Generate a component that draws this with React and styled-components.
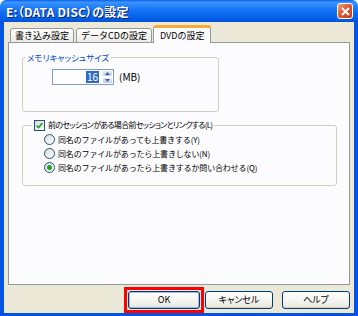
import React from 'react';
import styled, { createGlobalStyle } from 'styled-components';

const GlobalStyle = createGlobalStyle`
  html, body {
    margin: 0;
    padding: 0;
    background: #ffffff;
  }
  body {
    font-family: "Noto Sans CJK JP", "Liberation Sans", sans-serif;
    font-size: 8.5px;
    font-feature-settings: "palt";
  }
`;

const Window = styled.div`
  width: 358px;
  height: 316px;
  display: flex;
  flex-direction: column;
  overflow: hidden;
`;

const TitleBar = styled.div`
  height: 22px;
  flex: none;
  display: flex;
  align-items: center;
  justify-content: space-between;
  padding: 0 5px 0 6px;
  box-sizing: border-box;
  border-radius: 6px 6px 0 0;
  background: linear-gradient(
    to bottom,
    #0a5fe8 0%,
    #3d95ff 10%,
    #2a88fa 22%,
    #1470f2 50%,
    #0463ea 80%,
    #0452d8 100%
  );
`;

const Title = styled.span`
  color: #ffffff;
  font-weight: bold;
  font-size: 12px;
  letter-spacing: 0.2px;
  text-shadow: 1px 1px 0 #0a1e6e;
`;

const CloseButton = styled.div`
  width: 16px;
  height: 16px;
  border: 1px solid #ffffff;
  border-radius: 3px;
  box-sizing: border-box;
  background: linear-gradient(135deg, #f0a080 0%, #e0603a 40%, #c83a18 100%);
  display: flex;
  align-items: center;
  justify-content: center;
`;

const Body = styled.div`
  flex: 1;
  display: flex;
  flex-direction: column;
  background: #ece9d8;
  border: 4px solid #0553e2;
  border-top: none;
  border-bottom-width: 3px;
  padding: 3px 4px 0 4px;
`;

const TabStrip = styled.div`
  display: flex;
  align-items: flex-end;
  height: 18px;
  padding-left: 2px;
  margin-bottom: -1px;
  position: relative;
  z-index: 1;
`;

const Tab = styled.div`
  height: ${(p) => (p.$active ? '18px' : '15px')};
  box-sizing: border-box;
  padding: 0 ${(p) => (p.$active ? '6px' : '4px')};
  margin-right: ${(p) => (p.$active ? '0' : '2px')};
  margin-left: ${(p) => (p.$active ? '-1px' : '0')};
  border: 1px solid #919b9c;
  border-bottom: ${(p) => (p.$active ? 'none' : '1px solid #919b9c')};
  border-top: ${(p) => (p.$active ? '3px solid #f7a93a' : '1px solid #919b9c')};
  border-radius: 3px 3px 0 0;
  background: ${(p) =>
    p.$active ? '#fcfcfe' : 'linear-gradient(to bottom, #ffffff, #ecebe5)'};
  display: flex;
  align-items: center;
  line-height: 12px;
  font-size: 9px;
  font-feature-settings: normal;
  color: #000000;
  white-space: nowrap;
`;

const Panel = styled.div`
  height: 243px;
  box-sizing: border-box;
  border: 1px solid #919b9c;
  background: #fcfcfe;
  padding: 8px 0 0 13px;
`;

const Group = styled.fieldset`
  margin: ${(p) => p.$top || 0}px 0 0 0;
  padding: 0;
  width: ${(p) => p.$width}px;
  box-sizing: border-box;
  border: 1px solid #d0d0bf;
  border-radius: 3px;
  min-inline-size: 0;
`;

const Legend = styled.legend`
  padding: 0 2px;
  margin-left: ${(p) => p.$indent}px;
  line-height: 12px;
  font-size: ${(p) => p.$size || 8.5}px;
  letter-spacing: ${(p) => p.$tight || 0}px;
  color: ${(p) => p.$color || '#0046d5'};
  display: flex;
  align-items: center;
`;

const GroupContent = styled.div`
  padding: ${(p) => p.$pad};
`;

const SpinRow = styled.div`
  display: flex;
  align-items: center;
`;

const SpinBox = styled.div`
  display: flex;
  width: 62px;
  height: 16px;
  box-sizing: border-box;
  border: 1px solid #7f9db9;
  background: #ffffff;
`;

const SpinField = styled.div`
  flex: 1;
  display: flex;
  justify-content: flex-end;
  align-items: center;
  padding-right: 3px;
`;

const Selected = styled.span`
  background: #316ac5;
  color: #ffffff;
  line-height: 12px;
  font-size: 10px;
  padding: 0 1px;
`;

const SpinButtons = styled.div`
  width: 11px;
  display: flex;
  flex-direction: column;
`;

const SpinArrow = styled.div`
  flex: 1;
  background: linear-gradient(to bottom, #e5ecfd, #b8ccf4);
  border: 1px solid #ffffff;
  border-radius: 2px;
  display: flex;
  align-items: center;
  justify-content: center;
`;

const Unit = styled.span`
  margin-left: 5px;
  line-height: 12px;
  font-size: 10px;
`;

const CheckBox = styled.span`
  width: 11px;
  height: 11px;
  box-sizing: border-box;
  border: 1px solid #1c5180;
  background: linear-gradient(135deg, #dcdcd7, #ffffff);
  display: inline-flex;
  align-items: center;
  justify-content: center;
  margin-right: 3px;
`;

const RadioRow = styled.div`
  display: flex;
  align-items: center;
  height: 14px;
  font-size: 8px;
  letter-spacing: -0.15px;
  font-feature-settings: normal;
`;

const Radio = styled.span`
  width: 11px;
  height: 11px;
  box-sizing: border-box;
  border-radius: 50%;
  border: 1px solid #1c5180;
  background: linear-gradient(135deg, #dcdcd7, #ffffff);
  display: inline-flex;
  align-items: center;
  justify-content: center;
  margin-right: 3px;

  &::after {
    content: '';
    width: 5px;
    height: 5px;
    border-radius: 50%;
    background: ${(p) => (p.$checked ? '#21a121' : 'transparent')};
  }
`;

const ButtonRow = styled.div`
  display: flex;
  justify-content: flex-end;
  align-items: flex-start;
  padding-top: 2px;
`;

const Highlight = styled.div`
  border: 3px solid #ff0000;
  padding: 1px;
  margin-right: 1px;
`;

const Button = styled.div`
  width: ${(p) => p.$width || 68}px;
  height: 18px;
  box-sizing: border-box;
  border: 1px solid #003c74;
  border-radius: 3px;
  background: linear-gradient(to bottom, #ffffff 0%, #f4f3ee 60%, #e3e2da 100%);
  box-shadow: ${(p) =>
    p.$default ? 'inset 0 0 0 1px #9fb8ee' : 'inset 0 -1px 0 #d6d0c5'};
  display: flex;
  align-items: center;
  justify-content: center;
  line-height: 12px;
  font-size: 9px;
  margin-left: ${(p) => p.$gap || 0}px;
  margin-top: ${(p) => (p.$offset ? 4 : 0)}px;
`;

const radios = [
  { label: '同名のファイルがあっても上書きする(Y)', checked: false },
  { label: '同名のファイルがあったら上書きしない(N)', checked: false },
  { label: '同名のファイルがあったら上書きするか問い合わせる(Q)', checked: true },
];

const App = () => (
  <>
    <GlobalStyle />
    <Window>
      <TitleBar>
        <Title>E:（DATA DISC）の設定</Title>
        <CloseButton>
          <svg width="9" height="9" viewBox="0 0 9 9">
            <path d="M1 1 L8 8 M8 1 L1 8" stroke="#ffffff" strokeWidth="2" />
          </svg>
        </CloseButton>
      </TitleBar>
      <Body>
        <TabStrip>
          <Tab>書き込み設定</Tab>
          <Tab>データCDの設定</Tab>
          <Tab $active>DVDの設定</Tab>
        </TabStrip>
        <Panel>
          <Group $width={197}>
            <Legend $indent={2}>メモリキャッシュサイズ</Legend>
            <GroupContent $pad="6px 0 26px 29px">
              <SpinRow>
                <SpinBox>
                  <SpinField>
                    <Selected>16</Selected>
                  </SpinField>
                  <SpinButtons>
                    <SpinArrow>
                      <svg width="5" height="3" viewBox="0 0 5 3">
                        <path d="M0 3 L2.5 0 L5 3 Z" fill="#4d6185" />
                      </svg>
                    </SpinArrow>
                    <SpinArrow>
                      <svg width="5" height="3" viewBox="0 0 5 3">
                        <path d="M0 0 L2.5 3 L5 0 Z" fill="#4d6185" />
                      </svg>
                    </SpinArrow>
                  </SpinButtons>
                </SpinBox>
                <Unit>(MB)</Unit>
              </SpinRow>
            </GroupContent>
          </Group>
          <Group $top={7} $width={315}>
            <Legend $indent={9} $size={8} $tight={-0.7} $color="#000000">
              <CheckBox>
                <svg width="7" height="7" viewBox="0 0 7 7">
                  <path
                    d="M0.5 3.5 L2.5 5.5 L6.5 1"
                    stroke="#21a121"
                    strokeWidth="1.6"
                    fill="none"
                  />
                </svg>
              </CheckBox>
              前のセッションがある場合前セッションとリンクする(L)
            </Legend>
            <GroupContent $pad="1px 0 11px 21px">
              {radios.map((r) => (
                <RadioRow key={r.label}>
                  <Radio $checked={r.checked} />
                  {r.label}
                </RadioRow>
              ))}
            </GroupContent>
          </Group>
        </Panel>
        <ButtonRow>
          <Highlight>
            <Button $width={72} $default>
              OK
            </Button>
          </Highlight>
          <Button $offset>キャンセル</Button>
          <Button $offset $gap={9}>
            ヘルプ
          </Button>
        </ButtonRow>
      </Body>
    </Window>
  </>
);

export default App;
